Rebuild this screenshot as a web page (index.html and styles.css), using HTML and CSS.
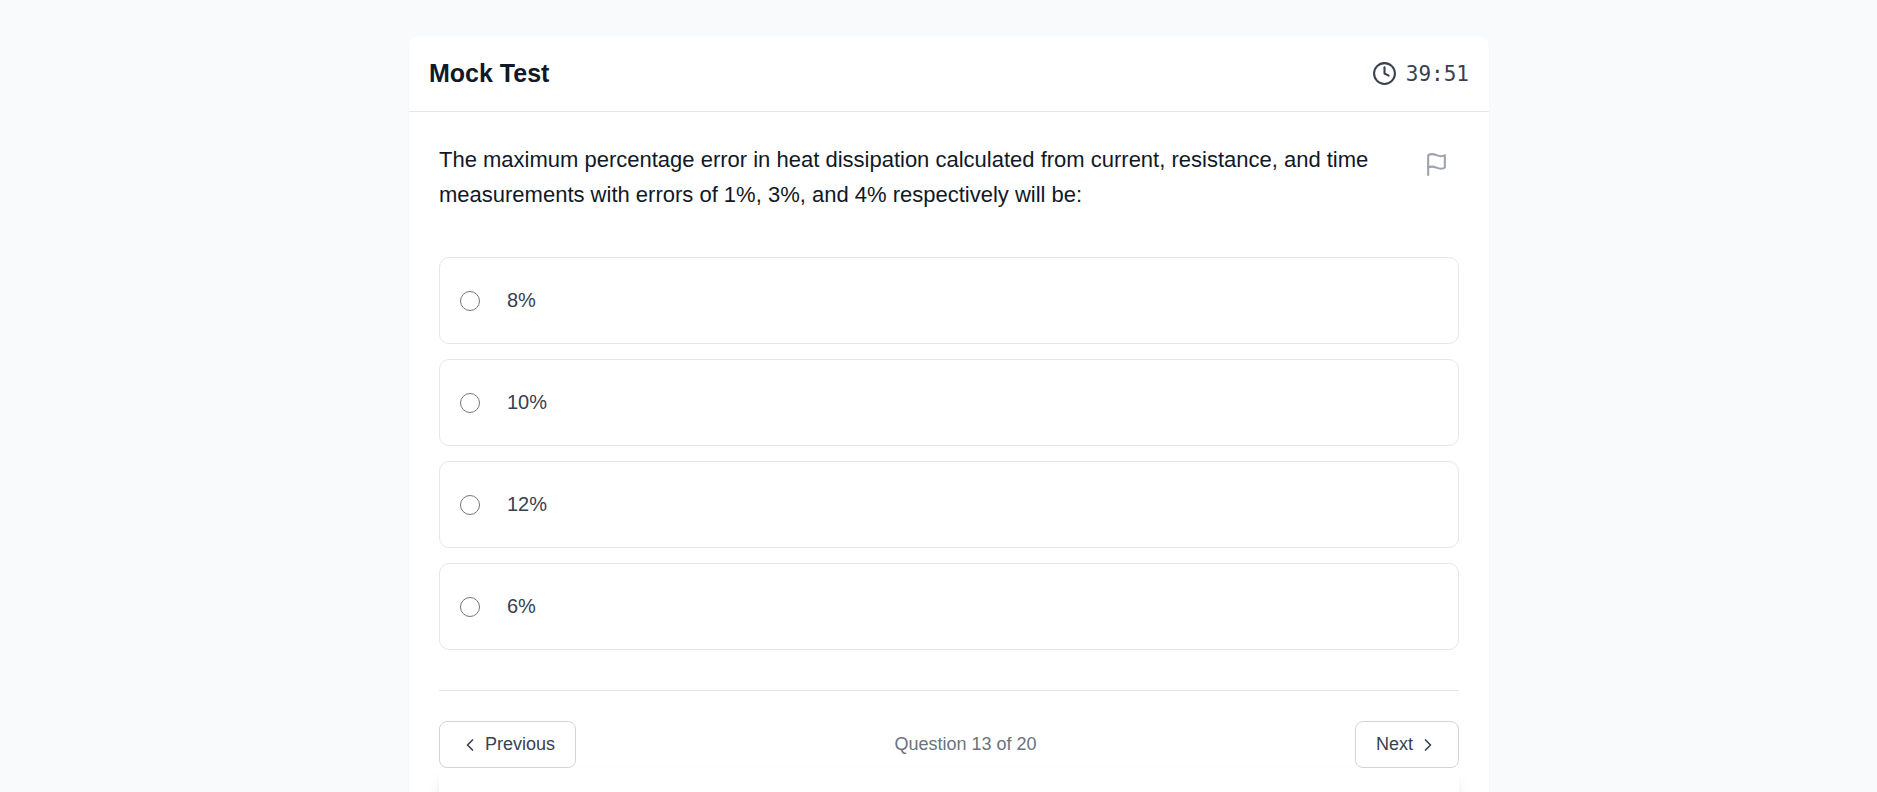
FILE: index.html
```html
<!DOCTYPE html>
<html lang="en">
<head>
    <meta charset="UTF-8">
    <meta name="viewport" content="width=device-width, initial-scale=1.0">
    <title>Mock Test</title>
    <link rel="stylesheet" href="styles.css">
</head>
<body>
    <main class="test-card">
        <header class="test-header">
            <h1>Mock Test</h1>
            <div class="timer">
                <svg class="icon" viewBox="0 0 24 24"><circle cx="12" cy="12" r="10"/><polyline points="12 6 12 12 16 14"/></svg>
                <span id="time">39:51</span>
            </div>
        </header>
        <div class="test-body">
            <div class="question">
                <h2 id="question-text">The maximum percentage error in heat dissipation calculated from current, resistance, and time measurements with errors of 1%, 3%, and 4% respectively will be:</h2>
                <button class="flag" type="button" aria-label="Flag question">
                    <svg class="icon" viewBox="0 0 24 24"><path d="M4 15s1-1 4-1 5 2 8 2 4-1 4-1V3s-1 1-4 1-5-2-8-2-4 1-4 1z"/><line x1="4" y1="22" x2="4" y2="15"/></svg>
                </button>
            </div>
            <div class="options" role="radiogroup" aria-labelledby="question-text">
                <label class="option"><input type="radio" name="answer" value="8"><span>8%</span></label>
                <label class="option"><input type="radio" name="answer" value="10"><span>10%</span></label>
                <label class="option"><input type="radio" name="answer" value="12"><span>12%</span></label>
                <label class="option"><input type="radio" name="answer" value="6"><span>6%</span></label>
            </div>
            <nav class="pager">
                <button class="nav-button" type="button">
                    <svg class="icon small" viewBox="0 0 24 24"><polyline points="15 18 9 12 15 6"/></svg>
                    Previous
                </button>
                <span class="progress">Question 13 of 20</span>
                <button class="nav-button" type="button">
                    Next
                    <svg class="icon small" viewBox="0 0 24 24"><polyline points="9 18 15 12 9 6"/></svg>
                </button>
            </nav>
            <section class="panel"></section>
        </div>
    </main>
</body>
</html>
```
FILE: styles.css
```css
* {
    box-sizing: border-box;
}
body {
    font-family: "Liberation Sans", Arial, sans-serif;
    background-color: #f9fafb;
    color: #111827;
    height: 100vh;
    overflow: hidden;
    margin: 0;
    padding: 36px 0 0 21px;
}
h1, h2 {
    margin: 0;
}
button {
    font-family: inherit;
    cursor: pointer;
}
.icon {
    width: 25px;
    height: 25px;
    fill: none;
    stroke: currentColor;
    stroke-width: 2;
    stroke-linecap: round;
    stroke-linejoin: round;
    flex-shrink: 0;
}
.icon.small {
    width: 20px;
    height: 20px;
}
.test-card {
    background-color: white;
    border-radius: 10px;
    box-shadow: 0 1px 2px rgba(0, 0, 0, 0.05);
    max-width: 1080px;
    margin: 0 auto;
}
.test-header {
    display: flex;
    justify-content: space-between;
    align-items: center;
    padding: 20px;
    border-bottom: 1px solid #e5e7eb;
}
.test-header h1 {
    font-size: 25px;
    line-height: 35px;
}
.timer {
    display: flex;
    align-items: center;
    gap: 9px;
    color: #374151;
    font-family: "DejaVu Sans Mono", monospace;
    font-size: 21px;
}
.test-body {
    padding: 30px;
}
.question {
    display: flex;
    justify-content: space-between;
    align-items: flex-start;
    margin-bottom: 45px;
}
.question h2 {
    font-size: 22px;
    font-weight: normal;
    line-height: 35px;
}
.flag {
    display: flex;
    margin-left: 20px;
    padding: 10px;
    border: none;
    background: none;
    color: #9ca3af;
}
.options {
    display: flex;
    flex-direction: column;
    gap: 15px;
}
.option {
    display: flex;
    align-items: center;
    gap: 27px;
    height: 87px;
    padding: 0 20px;
    border: 1px solid #e5e7eb;
    border-radius: 10px;
    color: #374151;
    font-size: 20px;
    cursor: pointer;
}
.option input {
    appearance: none;
    width: 20px;
    height: 20px;
    margin: 0;
    border: 1px solid #767676;
    border-radius: 50%;
}
.option input:checked {
    border: 6px solid #2563eb;
}
.pager {
    display: flex;
    justify-content: space-between;
    align-items: center;
    margin-top: 40px;
    padding-top: 30px;
    border-top: 1px solid #e5e7eb;
}
.nav-button {
    display: flex;
    align-items: center;
    gap: 5px;
    height: 47px;
    padding: 0 20px;
    border: 1px solid #d1d5db;
    border-radius: 8px;
    background-color: white;
    color: #374151;
    font-size: 18px;
}
.progress {
    color: #6b7280;
    font-size: 18px;
}
.panel {
    height: 80px;
    border-radius: 10px;
    box-shadow: 0 10px 19px -4px rgba(0, 0, 0, 0.1), 0 5px 8px -2px rgba(0, 0, 0, 0.05);
}
```
